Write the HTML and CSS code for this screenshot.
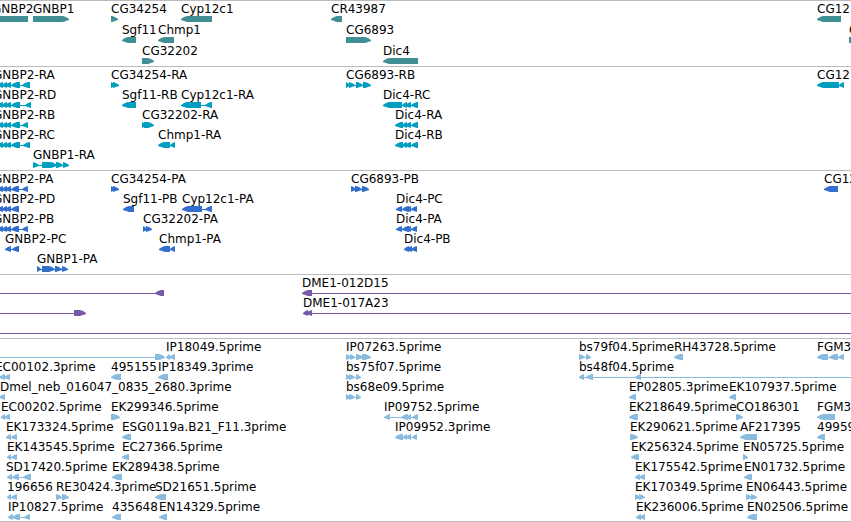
FILE: index.html
```html
<!DOCTYPE html>
<html lang="en">
<head>
<meta charset="utf-8">
<title>Genome tracks</title>
<link rel="stylesheet" href="styles.css">
</head>
<body>
<main class="browser">
  <section class="track track-gene" data-track="gene" aria-label="Genes"></section>
  <section class="track track-transcript" data-track="transcript" aria-label="Transcripts"></section>
  <section class="track track-protein" data-track="protein" aria-label="Proteins"></section>
  <section class="track track-bac" data-track="bac" aria-label="BAC clones"></section>
  <section class="track track-est" data-track="est" aria-label="ESTs"></section>
</main>
<script src="tracks.js"></script>
</body>
</html>
```
FILE: styles.css
```css
body {
  margin: 0;
  background: #fff;
  color: #000;
  font-family: "DejaVu Sans", Verdana, sans-serif;
  font-size: 12px;
}

.browser {
  overflow: hidden;
  border-bottom: 1px solid #bbb;
}

.track {
  border-top: 1px solid #bbb;
  padding-bottom: 3px;
}

.track-gene { color: #408f94; padding-bottom: 2px; }
.track-transcript { color: #009fc0; }
.track-protein { color: #336ecc; }
.track-bac { color: #7759a8; }
.track-est { color: #88bbdd; padding-bottom: 2px; }

.lane {
  position: relative;
  height: 20px;
}

.track-gene .lane { height: 21px; }

/* Each feature sits at its own map coordinate along the lane. */
.feature {
  position: absolute;
  top: 0;
  white-space: nowrap;
}

.label {
  display: block;
  height: 15px;
  line-height: 16px;
  color: #000;
}

.glyph {
  display: block;
  width: 1px;
  height: 6px;
  overflow: visible;
  fill: currentColor;
}
```
FILE: tracks.js
```js
// Each lane is a list of features: [label, start, strand, exons, line extent].
const END = 4000;
const tracks = {
  gene: [
    [["GNBP2", -8, "-", [[-8, 28]]], ["GNBP1", 33, "+", [[33, 69]]], ["CG34254", 111, "+", [[111, 118]]],
     ["Cyp12c1", 181, "-", [[181, 212]]], ["CR43987", 331, "-", [[331, 342]]], ["CG12", 817, "-", [[817, 841]]]],
    [["Sgf11", 122, "-", [[122, 136]]], ["Chmp1", 158, "-", [[158, 174]]], ["CG6893", 346, "+", [[346, 371]]],
     ["CG", 849, "+", [[849, 870]]]],
    [["CG32202", 142, "+", [[142, 154]]], ["Dic4", 383, "-", [[383, 418]]]]
  ],
  transcript: [
    [["GNBP2-RA", -7, "-", [[-3, 3], [2, 7], [5, 11], [11, 20], [22, 30]]], ["CG34254-RA", 111, "+", [[111, 115], [113, 119]]],
     ["CG6893-RB", 346, "+", [[346, 350], [349, 355], [356, 363], [363, 371]]], ["CG12", 817, "-", [[817, 839], [839, 844]]]],
    [["GNBP2-RD", -7, "-", [[-3, 3], [2, 7], [5, 11], [11, 20], [25, 31]]], ["Sgf11-RB", 122, "-", [[122, 136]]],
     ["Cyp12c1-RA", 181, "-", [[181, 201], [205, 212]]], ["Dic4-RC", 383, "-", [[383, 402], [402, 407], [405, 411], [411, 418]]]],
    [["GNBP2-RB", -7, "-", [[-3, 3], [2, 7], [5, 11], [11, 20], [22, 28]]], ["CG32202-RA", 142, "+", [[142, 146], [144, 154]]],
     ["Dic4-RA", 395, "-", [[395, 403], [402, 407], [405, 411], [411, 418]]]],
    [["GNBP2-RC", -7, "-", [[-3, 3], [2, 7], [5, 11], [11, 20], [23, 30]]], ["Chmp1-RA", 158, "-", [[158, 170], [170, 175]]],
     ["Dic4-RB", 395, "-", [[395, 403], [402, 407], [405, 411], [411, 418]]]],
    [["GNBP1-RA", 33, "+", [[33, 39], [42, 57], [56, 63], [63, 69]]]]
  ],
  protein: [
    [["GNBP2-PA", -7, "-", [[-3, 3], [2, 7], [5, 11], [11, 19], [22, 28]]], ["CG34254-PA", 111, "+", [[111, 115], [113, 119]]],
     ["CG6893-PB", 351, "+", [[351, 356], [355, 362], [362, 369]]], ["CG12", 824, "-", [[824, 838]]]],
    [["GNBP2-PD", -7, "-", [[-3, 3], [2, 7], [5, 11], [11, 19]]], ["Sgf11-PB", 123, "-", [[123, 134]]],
     ["Cyp12c1-PA", 182, "-", [[182, 202], [205, 212]]], ["Dic4-PC", 396, "-", [[396, 402], [402, 409], [406, 411], [411, 417]]]],
    [["GNBP2-PB", -7, "-", [[-3, 3], [2, 7], [5, 11], [11, 19], [22, 28]]], ["CG32202-PA", 143, "+", [[143, 147], [146, 152]]],
     ["Dic4-PA", 396, "-", [[396, 402], [402, 409], [406, 411], [411, 417]]]],
    [["GNBP2-PC", 5, "-", [[5, 11], [12, 19]]], ["Chmp1-PA", 159, "-", [[159, 170], [170, 175]]],
     ["Dic4-PB", 404, "-", [[404, 409], [407, 412], [411, 417]]]],
    [["GNBP1-PA", 37, "+", [[37, 41], [42, 55], [55, 62], [62, 68]]]]
  ],
  bac: [
    [["", 0, "-", [[155, 164]], [0, 164]], ["DME1-012D15", 302, "-", [[302, 312]], [302, END]]],
    [["", 0, "+", [[74, 86]], [0, 86]], ["DME1-017A23", 303, "-", [[303, 308], [306, 312]], [303, END]]],
    [["", 0, "+", [], [0, END]]]
  ],
  est: [
    [["", 0, "+", [[155, 165]], [0, 165]], ["IP18049.5prime", 166, "-", [[166, 170], [169, 175]]],
     ["IP07263.5prime", 346, "+", [[346, 351], [350, 355], [356, 363], [362, 371]]],
     ["bs79f04.5prime", 579, "+", [[579, 585], [586, 591]]], ["RH43728.5prime", 674, "-", [[674, 683]]],
     ["FGM3", 817, "-", [[817, 828], [829, 838], [838, 844]]]],
    [["EC00102.3prime", -5, "-", [[-1, 5], [4, 10]]], ["495155", 111, "-", [[111, 121]]], ["IP18349.3prime", 158, "-", [[158, 168]]],
     ["bs75f07.5prime", 346, "+", [[346, 350], [349, 355], [356, 361]]],
     ["bs48f04.5prime", 579, "-", [[579, 584], [586, 593], [635, 641]], [579, END]]],
    [["Dmel_neb_016047_0835_2680.3prime", 0, "-", [[-1, 5]]], ["bs68e09.5prime", 346, "+", [[346, 350], [349, 355], [356, 361]]],
     ["EP02805.3prime", 629, "-", [[629, 636]]], ["EK107937.5prime", 729, "-", [[729, 736]]]],
    [["EC00202.5prime", 1, "-", [[1, 5], [4, 10]]], ["EK299346.5prime", 111, "+", [[111, 120]]],
     ["IP09752.5prime", 384, "-", [[384, 390], [401, 408], [407, 411], [412, 418]]],
     ["EK218649.5prime", 629, "-", [[629, 638]]], ["CO186301", 736, "+", [[736, 743]]], ["FGM3", 817, "-", [[817, 835]]]],
    [["EK173324.5prime", 6, "-", [[6, 11], [11, 17]]], ["ESG0119a.B21_F11.3prime", 122, "-", [[122, 131]]],
     ["IP09952.3prime", 395, "-", [[395, 403], [403, 407], [406, 411], [412, 417]]],
     ["EK290621.5prime", 630, "+", [[630, 638]]], ["AF217395", 740, "-", [[740, 757]]], ["49959", 817, "-", [[817, 825]]]],
    [["EK143545.5prime", 7, "-", [[7, 11], [11, 17]]], ["EC27366.5prime", 122, "-", [[122, 129]]],
     ["EK256324.5prime", 631, "-", [[631, 639]]], ["EN05725.5prime", 743, "+", [[743, 748]]]],
    [["SD17420.5prime", 6, "-", [[7, 12], [12, 19], [23, 31]]], ["EK289438.5prime", 112, "-", [[112, 122]]],
     ["EK175542.5prime", 635, "-", [[635, 640], [639, 645]]], ["EN01732.5prime", 744, "-", [[744, 752]]]],
    [["196656", 7, "-", [[7, 11], [11, 17]]], ["RE30424.3prime", 56, "+", [[56, 62], [62, 69]]],
     ["SD21651.5prime", 155, "-", [[155, 166]]], ["EK170349.5prime", 635, "+", [[635, 640], [639, 645]]],
     ["EN06443.5prime", 746, "+", [[746, 752], [751, 757]]]],
    [["IP10827.5prime", 8, "-", [[8, 13], [12, 20], [24, 30]]], ["435648", 112, "-", [[112, 121]]],
     ["EN14329.5prime", 159, "-", [[159, 167]]], ["EK236006.5prime", 636, "-", [[636, 641], [640, 645]]],
     ["EN02506.5prime", 747, "-", [[747, 757]]]]
  ]
};

// An exon is a block that tapers to a rounded point in the direction of its strand.
function exonPath(from, to, strand) {
  const tip = Math.min(6, to - from);
  const mid = tip / 2;
  return strand === "+"
    ? `M${from} 0H${to - tip}L${to - mid} 1L${to} 3V4L${to - mid} 5L${to - tip} 6H${from}Z`
    : `M${to} 0H${from + tip}L${from + mid} 1L${from} 3V4L${from + mid} 5L${from + tip} 6H${to}Z`;
}

function glyph(start, strand, exons, extent) {
  const [from, to] = extent || [exons[0][0], exons[exons.length - 1][1]];
  const paths = exons.map(([a, b]) => `<path d="${exonPath(a - start, b - start, strand)}"/>`).join("");
  return `<svg class="glyph" aria-hidden="true"><rect x="${from - start}" y="3" width="${to - from}" height="1"/>${paths}</svg>`;
}

for (const section of document.querySelectorAll("[data-track]")) {
  section.innerHTML = tracks[section.dataset.track].map(lane =>
    `<div class="lane">${lane.map(([label, start, strand, exons, extent]) =>
      `<div class="feature" style="left:${start}px"><span class="label">${label}</span>${glyph(start, strand, exons, extent)}</div>`
    ).join("")}</div>`
  ).join("");
}
```
